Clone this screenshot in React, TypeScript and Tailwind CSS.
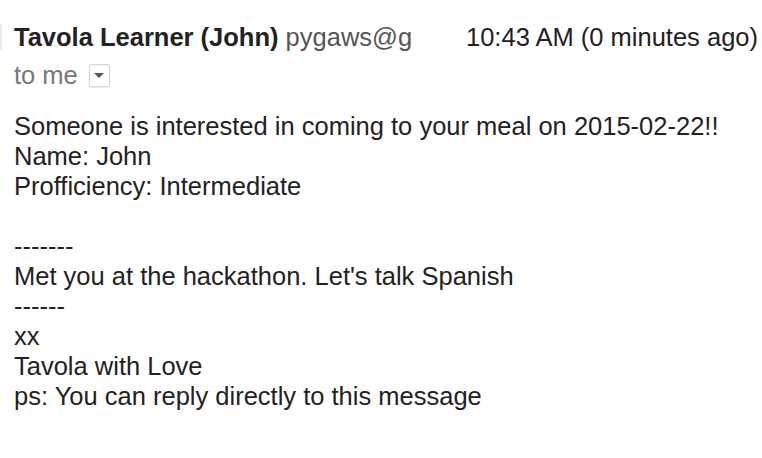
import React from 'react';

const bodyLines = [
    'Someone is interested in coming to your meal on 2015-02-22!!',
    'Name: John',
    'Profficiency: Intermediate',
    '',
    '-------',
    "Met you at the hackathon. Let's talk Spanish",
    '------',
    'xx',
    'Tavola with Love',
    'ps: You can reply directly to this message',
];

export default function App() {
    return (
        <div className="w-[762px] h-[458px] bg-white overflow-hidden font-['Liberation_Sans',Arial,sans-serif] text-[25.5px] text-[#222]">
            {/* Header */}
            <div className="flex items-center pt-[22px]">
                <div className="w-[2px] h-[26px] bg-[#e8e8e8] mr-[12px]" />
                <div className="w-[398px] overflow-hidden whitespace-nowrap leading-[30px]">
                    <span className="font-bold text-[#222]">Tavola Learner (John)</span>{' '}
                    <span className="text-[#555]">pygaws@gmail.com</span>
                </div>
                <div className="ml-[54px] whitespace-nowrap leading-[30px] text-[#222]">10:43 AM (0 minutes ago)</div>
            </div>
            <div className="flex items-center pl-[14px] mt-[8px] text-[#777]">
                <span className="leading-[30px]">to me</span>
                <span className="ml-[11px] w-[21px] h-[23px] border border-[#d4d4d4] rounded-[2px] shadow-[0_1px_1px_rgba(0,0,0,0.08)] flex items-center justify-center">
                    <span className="w-0 h-0 border-l-[5px] border-r-[5px] border-t-[5px] border-l-transparent border-r-transparent border-t-[#555]" />
                </span>
            </div>

            {/* Body */}
            <div className="pl-[14px] pt-[21px]">
                {bodyLines.map((line, i) => (
                    <div key={i} className="leading-[30px] h-[30px] whitespace-nowrap">{line}</div>
                ))}
            </div>
        </div>
    );
}
